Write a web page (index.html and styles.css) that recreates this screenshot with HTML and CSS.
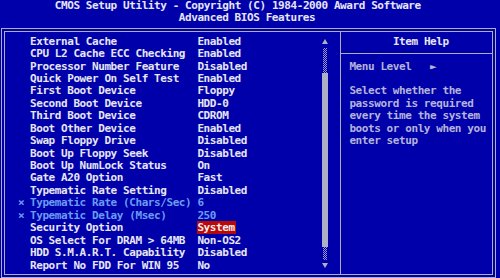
FILE: index.html
```html
<!DOCTYPE html>
<html lang="en">
<head>
    <meta charset="UTF-8">
    <title>Advanced BIOS Features</title>
    <link rel="stylesheet" href="styles.css">
</head>
<body>

<div class="screen">

    <!-- Titel linjer -->
    <header class="title">
        <div class="title-line copyright">CMOS Setup Utility - Copyright (C) 1984-2000 Award Software</div>
        <div class="title-line page-name">Advanced BIOS Features</div>
    </header>

    <div class="frame">

        <section class="setup">
            <ul class="items">
                <li class="item"><span class="mark"></span><span class="name">External Cache</span><span class="value">Enabled</span></li>
                <li class="item"><span class="mark"></span><span class="name">CPU L2 Cache ECC Checking</span><span class="value">Enabled</span></li>
                <li class="item"><span class="mark"></span><span class="name">Processor Number Feature</span><span class="value">Disabled</span></li>
                <li class="item"><span class="mark"></span><span class="name">Quick Power On Self Test</span><span class="value">Enabled</span></li>
                <li class="item"><span class="mark"></span><span class="name">First Boot Device</span><span class="value">Floppy</span></li>
                <li class="item"><span class="mark"></span><span class="name">Second Boot Device</span><span class="value">HDD-0</span></li>
                <li class="item"><span class="mark"></span><span class="name">Third Boot Device</span><span class="value">CDROM</span></li>
                <li class="item"><span class="mark"></span><span class="name">Boot Other Device</span><span class="value">Enabled</span></li>
                <li class="item"><span class="mark"></span><span class="name">Swap Floppy Drive</span><span class="value">Disabled</span></li>
                <li class="item"><span class="mark"></span><span class="name">Boot Up Floppy Seek</span><span class="value">Disabled</span></li>
                <li class="item"><span class="mark"></span><span class="name">Boot Up NumLock Status</span><span class="value">On</span></li>
                <li class="item"><span class="mark"></span><span class="name">Gate A20 Option</span><span class="value">Fast</span></li>
                <li class="item"><span class="mark"></span><span class="name">Typematic Rate Setting</span><span class="value">Disabled</span></li>
                <li class="item locked"><span class="mark">×</span><span class="name">Typematic Rate (Chars/Sec)</span><span class="value">6</span></li>
                <li class="item locked"><span class="mark">×</span><span class="name">Typematic Delay (Msec)</span><span class="value">250</span></li>
                <li class="item"><span class="mark"></span><span class="name">Security Option</span><span class="value"><span class="selected">System</span></span></li>
                <li class="item"><span class="mark"></span><span class="name">OS Select For DRAM &gt; 64MB</span><span class="value">Non-OS2</span></li>
                <li class="item"><span class="mark"></span><span class="name">HDD S.M.A.R.T. Capability</span><span class="value">Disabled</span></li>
                <li class="item"><span class="mark"></span><span class="name">Report No FDD For WIN 95</span><span class="value">No</span></li>
            </ul>

            <div class="scrollbar">
                <span class="arrow up"></span>
                <span class="track long"></span>
                <span class="thumb"></span>
                <span class="track"></span>
                <span class="arrow down"></span>
            </div>
        </section>

        <aside class="help">
            <div class="help-title">Item Help</div>
            <div class="help-rule"></div>
            <div class="help-line">Menu Level   ►</div>
            <p class="help-text">Select whether the password is required every time the system boots or only when you enter setup</p>
        </aside>

    </div>
</div>

</body>
</html>
```

FILE: styles.css
```css
:root {
    --cw: 6.2px;
    --rh: 12.44px;
    --blue: #0000aa;
    --gray: #aeaec4;
}

body {
    margin: 0;
    background: var(--blue);
    color: #e6e6f4;
    font-family: "DejaVu Sans Mono", "Liberation Mono", monospace;
    font-weight: bold;
    font-size: 11px;
    letter-spacing: -0.42px;
    line-height: var(--rh);
    overflow: hidden;
}

.screen {
    width: 500px;
    height: 278px;
    overflow: hidden;
}

/* Titel */
.title {
    margin-top: -0.5px;
    padding-bottom: 4px;
}

.title-line {
    white-space: pre;
    height: var(--rh);
}

.copyright {
    padding-left: calc(var(--cw) * 9 - 1px);
}

.page-name {
    padding-left: calc(var(--cw) * 29 - 1px);
}

/* Ramme */
.frame {
    box-sizing: border-box;
    margin-left: 1px;
    width: 495px;
    height: 250px;
    border: 4px double var(--gray);
    display: flex;
}

.setup {
    width: 332px;
    border-right: 1px solid var(--gray);
    display: flex;
    align-items: flex-start;
    padding: 3.3px 0 0 12.6px;
}

.items {
    list-style: none;
    margin: 0;
    padding: 0;
    width: 304.9px;
}

.item {
    display: grid;
    grid-template-columns: calc(var(--cw) * 2) calc(var(--cw) * 27) 1fr;
    height: var(--rh);
    white-space: pre;
}

.item.locked {
    color: #6a9cf4;
}

.mark {
    padding-left: 0.5px;
}

.selected {
    background: #b80808;
    color: #f4ecec;
    padding: 0 1px 0 0;
}

/* Scrollbar */
.scrollbar {
    width: 6px;
    display: flex;
    flex-direction: column;
    align-items: center;
}

.arrow {
    height: var(--rh);
    width: 6px;
    display: flex;
    align-items: center;
    justify-content: center;
}

.arrow::before {
    content: "";
    width: 0;
    height: 0;
    border-left: 3px solid transparent;
    border-right: 3px solid transparent;
}

.arrow.up::before {
    border-bottom: 5px solid var(--gray);
}

.arrow.down::before {
    border-top: 5px solid var(--gray);
}

.track {
    width: 4px;
    height: var(--rh);
    background: repeating-conic-gradient(#9a9ad0 0 25%, transparent 0 50%) 0 0 / 2px 2px;
}

.track.long {
    height: calc(var(--rh) * 2);
}

.thumb {
    width: 6px;
    height: calc(var(--rh) * 14);
    background: var(--gray);
}

/* Hjaelp */
.help {
    flex: 1;
    padding-top: 3.3px;
    color: #b4b4dc;
}

.help-title {
    height: var(--rh);
    padding-left: 52px;
    color: #e6e6f4;
}

.help-rule {
    border-top: 1px solid var(--gray);
    margin: 5px 0 6.5px 0;
}

.help-line {
    height: var(--rh);
    padding-left: 8.5px;
    white-space: pre;
}

.help-text {
    margin: var(--rh) 0 0 0;
    padding-left: 8.5px;
    width: calc(var(--cw) * 23);
}
```
